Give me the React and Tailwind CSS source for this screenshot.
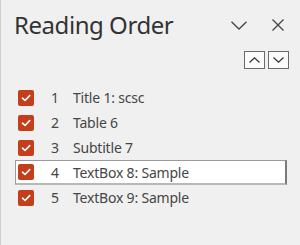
import React from 'react';

const items = [
  { n: 1, label: 'Title 1: scsc' },
  { n: 2, label: 'Table 6' },
  { n: 3, label: 'Subtitle 7' },
  { n: 4, label: 'TextBox 8: Sample', selected: true },
  { n: 5, label: 'TextBox 9: Sample' },
];

const CheckBox = () => (
  <span className="w-4 h-4 rounded-[2px] bg-[#c43e1c] flex items-center justify-center shrink-0">
    <svg width="10" height="8" viewBox="0 0 10 8" fill="none">
      <path d="M1.5 4.2 L4 6.5 L8.7 1.6" stroke="#fff" strokeWidth="1.6" strokeLinecap="round" strokeLinejoin="round" />
    </svg>
  </span>
);

const SmallButton = ({ up }) => (
  <button className="w-[21px] h-[18px] border border-[#6b6b6b] bg-[#fbfbfb] flex items-center justify-center">
    <svg width="11" height="6" viewBox="0 0 11 6" fill="none">
      <path d={up ? 'M0.5 5.5 L5.5 0.8 L10.5 5.5' : 'M0.5 0.5 L5.5 5.2 L10.5 0.5'} stroke="#333" strokeWidth="1.2" />
    </svg>
  </button>
);

export default function App() {
  return (
    <div
      className="w-[300px] h-[245px] bg-[#f0f0f0] border-l border-[#cfcfcf] overflow-hidden"
      style={{ fontFamily: '"Noto Sans", "Open Sans", sans-serif' }}
    >
      {/* header */}
      <div className="flex items-center h-[46px] pt-[4px] pl-[13px] pr-[16px]">
        <h1 className="flex-1 text-[24px] leading-[32px] text-[#333333] tracking-[-0.45px]">Reading Order</h1>
        <svg width="16" height="9" viewBox="0 0 16 9" fill="none" className="mr-[25px]">
          <path d="M0.5 0.8 L8 8 L15.5 0.8" stroke="#444" strokeWidth="1.3" />
        </svg>
        <svg width="12" height="12" viewBox="0 0 12 12" fill="none">
          <path d="M0.5 0.5 L11.5 11.5 M11.5 0.5 L0.5 11.5" stroke="#444" strokeWidth="1.3" />
        </svg>
      </div>

      {/* move up / down */}
      <div className="flex justify-end gap-[3px] mt-[5px] pr-[11px]">
        <SmallButton up />
        <SmallButton />
      </div>

      {/* list */}
      <div className="mt-[16px] ml-[14px] w-[272px]">
        {items.map((it) => (
          <div
            key={it.n}
            className={`flex items-center h-[25px] pl-[2px] border ${
              it.selected
                ? 'bg-white border-[#9a9a9a] border-r-2 border-r-[#7a7a7a] border-b-2 border-b-[#b8b8b8]'
                : 'border-transparent'
            }`}
          >
            <CheckBox />
            <span className="ml-[17px] w-[22px] text-[14px] text-[#464646]">{it.n}</span>
            <span className="text-[14px] text-[#464646] tracking-[-0.2px]">{it.label}</span>
          </div>
        ))}
      </div>
    </div>
  );
}
